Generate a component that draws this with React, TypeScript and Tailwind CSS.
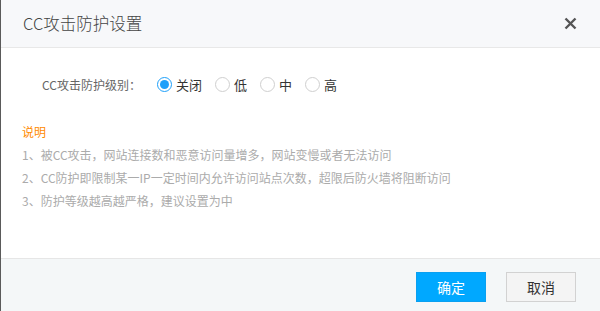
import React, { useState } from "react";

const levels = ["关闭", "低", "中", "高"];

const notes = [
  "1、被CC攻击，网站连接数和恶意访问量增多，网站变慢或者无法访问",
  "2、CC防护即限制某一IP一定时间内允许访问站点次数，超限后防火墙将阻断访问",
  "3、防护等级越高越严格，建议设置为中",
];

const Radio: React.FC<{ checked: boolean; label: string; onClick: () => void }> = ({ checked, label, onClick }) => (
  <label className="mr-[13px] flex cursor-pointer items-center" onClick={onClick}>
    <span
      className={`flex h-[15px] w-[15px] items-center justify-center rounded-full border ${
        checked ? "border-[#1ea0fa]" : "border-[#cfcfcf]"
      } bg-white`}
    >
      {checked && <span className="h-[9px] w-[9px] rounded-full bg-[#1ea0fa]" />}
    </span>
    <span className="ml-[4px] text-[13px] text-[#333]">{label}</span>
  </label>
);

export default function App() {
  const [level, setLevel] = useState(0);

  return (
    <div
      className="flex h-[311px] w-[600px] flex-col border-l border-[#5a5a5a] bg-white"
      style={{ fontFamily: '"Microsoft YaHei", "Noto Sans CJK SC", "Liberation Sans", sans-serif' }}
    >
      <div className="flex h-[48px] shrink-0 items-center justify-between border-b border-[#e8e8e8] bg-[#f7f8fa] pl-[22px] pr-[23px]">
        <span className="text-[16.5px] font-light text-[#444]">CC攻击防护设置</span>
        <svg width="13" height="13" viewBox="0 0 13 13" className="text-[#555]">
          <path d="M1.5 1.5 L11.5 11.5 M11.5 1.5 L1.5 11.5" stroke="currentColor" strokeWidth="2.4" />
        </svg>
      </div>

      <div className="flex-1 px-[21px]">
        <div className="mt-[27px] flex items-center">
          <span className="ml-[20px] w-[115px] text-[12px] text-[#666]">CC攻击防护级别：</span>
          {levels.map((l, i) => (
            <Radio key={l} label={l} checked={level === i} onClick={() => setLevel(i)} />
          ))}
        </div>
        <div className="mt-[25px] text-[12px] leading-[23px]">
          <div className="text-[#ff8a00]">说明</div>
          {notes.map((n) => (
            <div key={n} className="text-[#ababab]">
              {n}
            </div>
          ))}
        </div>
      </div>

      <div className="flex h-[53px] shrink-0 items-start justify-end gap-[20px] border-t border-[#e6e6e6] bg-[#f4f7f8] pr-[24px] pt-[13px]">
        <button className="h-[30px] w-[70px] border border-[#0aa0f0] bg-[#00a8ff] text-[14px] text-white">确定</button>
        <button className="h-[30px] w-[70px] border border-[#d2d2d2] bg-[#f4f4f4] text-[14px] text-[#333]">取消</button>
      </div>
    </div>
  );
}
